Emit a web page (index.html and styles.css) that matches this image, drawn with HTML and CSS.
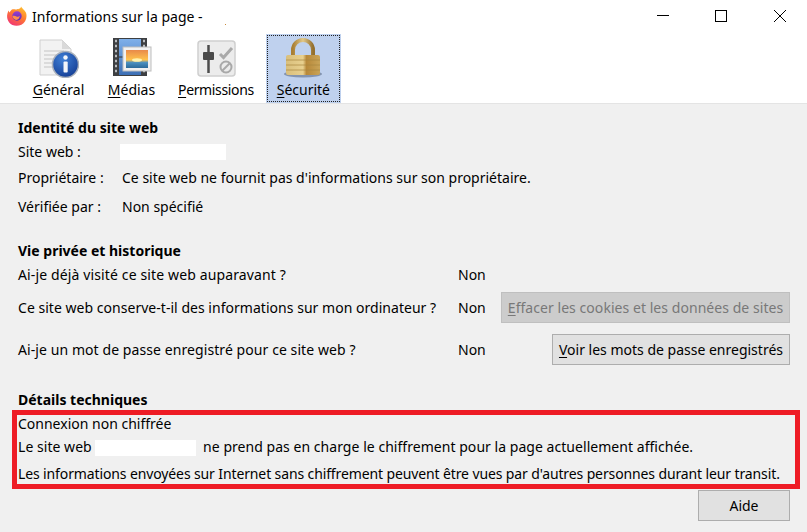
FILE: index.html
```html
<!DOCTYPE html>
<html lang="fr">
<head>
    <meta charset="UTF-8">
    <meta name="viewport" content="width=device-width, initial-scale=1.0">
    <title>Informations sur la page</title>
    <link rel="stylesheet" href="styles.css">
</head>
<body>
    <div class="titlebar">
        <svg class="app-logo" width="20" height="20" viewBox="0 0 20 20">
            <defs>
                <linearGradient id="foxOuter" x1="0.8" y1="0" x2="0.2" y2="1">
                    <stop offset="0" stop-color="#ffc22e"/>
                    <stop offset="0.45" stop-color="#ff7a2f"/>
                    <stop offset="1" stop-color="#f0307a"/>
                </linearGradient>
                <linearGradient id="foxInner" x1="0.5" y1="0" x2="0.5" y2="1">
                    <stop offset="0" stop-color="#9a3fd0"/>
                    <stop offset="1" stop-color="#5b2bb0"/>
                </linearGradient>
            </defs>
            <path d="M14 0.500c.8 1.800 3.600 3.200 5 6.200 1.600 4.800-.6 10-4.600 12-4 2-9.400 1.400-12.200-2.100C.4 14.200-.300 11 .300 8.300c.2-1.200.8-2.900 1.500-3.800.1.900.4 1.500.9 2 .5-1.300 1.500-2.500 2.900-3.200.8 0 2.400-.1 3 .3C10.500 3.300 14 3 14 .5z" fill="url(#foxOuter)"/>
            <circle cx="10" cy="10" r="4.700" fill="url(#foxInner)"/>
            <path d="M5.500 10c1.500-.6 2.800-.2 4 .4 1.200.6 2.400.2 3.300-.6-.2 2.300-1.500 4-3.600 4.100-1.700.1-3.400-1.700-3.700-3.900z" fill="#ff8f4a"/>
        </svg>
        <span class="title-text">Informations sur la page -</span>
        <span class="title-dot"></span>
        <div class="window-buttons">
            <svg width="14" height="14" viewBox="0 0 14 14"><path d="M0 6.500h12" stroke="#000" fill="none"/></svg>
            <svg width="14" height="14" viewBox="0 0 14 14"><rect x="0.500" y="1.500" width="11" height="11" stroke="#000" fill="none"/></svg>
            <svg width="14" height="14" viewBox="0 0 14 14"><path d="M1 1l12 12M13 1L1 13" stroke="#000" fill="none"/></svg>
        </div>
    </div>

    <nav class="toolbar">
        <a class="tab">
            <svg class="tab-icon" width="40" height="40" viewBox="0 0 40 40">
                <defs>
                    <radialGradient id="infoBlue" cx="0.4" cy="0.3" r="0.8">
                        <stop offset="0" stop-color="#3f7fd6"/>
                        <stop offset="1" stop-color="#12398f"/>
                    </radialGradient>
                </defs>
                <path d="M1 2h22l9 9v26H1z" fill="#f2f2f2" stroke="#cfcfcf"/>
                <path d="M23 2v9h9z" fill="#d9d9d9"/>
                <path d="M5 13h20M5 17h18M5 21h14M5 25h12M5 29h12" stroke="#c4c4c4"/>
                <circle cx="26.500" cy="26.500" r="13" fill="url(#infoBlue)" stroke="#a9b0bb" stroke-width="1.500"/>
                <circle cx="26.500" cy="19.500" r="2.200" fill="#f4f6fa"/>
                <rect x="24.500" y="23.500" width="4.200" height="11" rx="1" fill="#f4f6fa"/>
            </svg>
            <span><u>G</u>énéral</span>
        </a>
        <a class="tab tab-medias">
            <svg class="tab-icon" width="40" height="40" viewBox="-1 0 40 40">
                <defs>
                    <linearGradient id="sunset" x1="0" y1="0" x2="0" y2="1">
                        <stop offset="0" stop-color="#e8894a"/>
                        <stop offset="0.55" stop-color="#ffc34d"/>
                        <stop offset="0.7" stop-color="#4a8fc0"/>
                        <stop offset="1" stop-color="#2d6a99"/>
                    </linearGradient>
                    <linearGradient id="filmBlue" x1="0" y1="0" x2="0" y2="1">
                        <stop offset="0" stop-color="#7fb0ea"/>
                        <stop offset="1" stop-color="#3c6fb5"/>
                    </linearGradient>
                </defs>
                <rect x="0" y="0" width="34" height="38" fill="#3d3f42"/>
                <rect x="6" y="1" width="22" height="36" fill="url(#filmBlue)"/>
                <path d="M6 19h22" stroke="#333"/>
                <path d="M2 3h2M2 8h2M2 13h2M2 18h2M2 23h2M2 28h2M2 33h2M30 3h2M30 8h2" stroke="#b9bcc0" stroke-width="2.500"/>
                <path d="M30 33h2" stroke="#b9bcc0" stroke-width="2.500"/>
                <rect x="10" y="9" width="28" height="24" fill="#f1f1f1" stroke="#bdbdbd"/>
                <rect x="13" y="12" width="22" height="18" fill="url(#sunset)"/>
                <ellipse cx="24" cy="22" rx="5" ry="1.800" fill="#fff2b0"/>
            </svg>
            <span><u>M</u>édias</span>
        </a>
        <a class="tab tab-permissions">
            <svg class="tab-icon" width="40" height="40" viewBox="-1 0 40 40">
                <rect x="1" y="3" width="37" height="35" rx="3" fill="#ececec" stroke="#cfcfcf" stroke-width="1.500"/>
                <path d="M11.500 7v28" stroke="#4c4c4c" stroke-width="2.500"/>
                <rect x="6" y="14" width="11" height="8" rx="1" fill="#4a4a4a"/>
                <path d="M23 16l3.500 3.500L35 10" fill="none" stroke="#a9a9a9" stroke-width="3"/>
                <circle cx="29" cy="29" r="5.500" fill="none" stroke="#a9a9a9" stroke-width="2"/>
                <path d="M25.500 32.500l7-7" stroke="#a9a9a9" stroke-width="2"/>
            </svg>
            <span><u>P</u>ermissions</span>
        </a>
        <a class="tab tab-selected">
            <svg class="tab-icon" width="40" height="40" viewBox="0 0 40 40">
                <defs>
                    <linearGradient id="lockBody" x1="0" y1="0" x2="1" y2="0">
                        <stop offset="0" stop-color="#d9bf7c"/>
                        <stop offset="0.5" stop-color="#e8d08f"/>
                        <stop offset="0.6" stop-color="#b8893a"/>
                        <stop offset="1" stop-color="#c9a458"/>
                    </linearGradient>
                    <linearGradient id="lockRing" x1="0" y1="0" x2="1" y2="0">
                        <stop offset="0" stop-color="#a97f35"/>
                        <stop offset="0.5" stop-color="#e2c98a"/>
                        <stop offset="1" stop-color="#94702f"/>
                    </linearGradient>
                </defs>
                <ellipse cx="20" cy="36" rx="19" ry="3.500" fill="#5b6a85" opacity="0.6"/>
                <path d="M10 19V12a10 10 0 0 1 20 0v7" fill="none" stroke="url(#lockRing)" stroke-width="4"/>
                <rect x="3" y="17" width="34" height="20" rx="2" fill="url(#lockBody)"/>
                <path d="M3 22h34M3 27h34M3 32h34" stroke="#a8873f" stroke-opacity="0.7"/>
            </svg>
            <span><u>S</u>écurité</span>
        </a>
    </nav>

    <main class="content">
        <section class="section section-identity">
            <h2>Identité du site web</h2>
            <div class="info-row info-row-first">
                <span class="info-label">Site web :</span>
                <span class="blank blank-site"></span>
            </div>
            <div class="info-row">
                <span class="info-label">Propriétaire :</span>
                <span>Ce site web ne fournit pas d'informations sur son propriétaire.</span>
            </div>
            <div class="info-row">
                <span class="info-label">Vérifiée par :</span>
                <span>Non spécifié</span>
            </div>
        </section>

        <section class="section section-privacy">
            <h2>Vie privée et historique</h2>
            <div class="privacy-row privacy-row-short">
                <span class="privacy-label label-visited">Ai-je déjà visité ce site web auparavant ?</span>
                <span>Non</span>
            </div>
            <div class="privacy-row">
                <span class="privacy-label label-cookies">Ce site web conserve-t-il des informations sur mon ordinateur ?</span>
                <span>Non</span>
                <button class="btn btn-clear" disabled><u>E</u>ffacer les cookies et les données de sites</button>
            </div>
            <div class="privacy-row">
                <span class="privacy-label">Ai-je un mot de passe enregistré pour ce site web ?</span>
                <span>Non</span>
                <button class="btn"><u>V</u>oir les mots de passe enregistrés</button>
            </div>
        </section>

        <section class="section section-details">
            <h2>Détails techniques</h2>
            <div class="details-box">
                <p>Connexion non chiffrée</p>
                <p class="line-site">Le site web <span class="blank blank-inline"></span> ne prend pas en charge le chiffrement pour la page actuellement affichée.</p>
                <p class="line-transit">Les informations envoyées sur Internet sans chiffrement peuvent être vues par d'autres personnes durant leur transit.</p>
            </div>
        </section>

        <div class="footer">
            <button class="btn btn-help">Aide</button>
        </div>
    </main>
</body>
</html>
```

FILE: styles.css
```css
* {
    box-sizing: border-box;
}
html, body {
    height: 100%;
}
body {
    margin: 0;
    background-color: #fff;
    color: #000;
    font-family: "Noto Sans", "Open Sans", sans-serif;
    font-size: 14px;
    display: flex;
    flex-direction: column;
    overflow: hidden;
}
u {
    text-underline-offset: 2px;
}

/* title bar */
.titlebar {
    height: 34px;
    flex: none;
    display: flex;
    align-items: center;
    padding-left: 7px;
}
.app-logo {
    flex: none;
    margin-bottom: 2px;
}
.title-text {
    margin: 0 0 1px 5px;
}
.title-dot {
    width: 1px;
    height: 1px;
    margin: 14px 0 0 22px;
    background-color: #c98a3c;
}
.window-buttons {
    margin-left: auto;
    display: flex;
    gap: 44px;
    padding: 0 20px 2px 0;
}

/* toolbar */
.toolbar {
    height: 70px;
    flex: none;
    display: flex;
    padding-left: 21px;
    border-bottom: 1px solid #e4e4e4;
}
.tab {
    min-width: 75px;
    padding: 2px 7px 0;
    display: flex;
    flex-direction: column;
    align-items: center;
    justify-content: space-between;
    white-space: nowrap;
}
.tab-icon {
    margin-top: 2px;
    flex: none;
}
.tab span {
    margin-bottom: 4px;
}
.tab-medias {
    margin: 0 2px 0 -2px;
}
.tab-permissions span {
    letter-spacing: -0.35px;
}
.tab-permissions {
    margin-left: -2px;
    padding: 2px 7px 0 9px;
}
.tab-selected {
    margin-left: 5px;
    background-color: #bfd1ee;
    outline: 1px dotted #222;
    outline-offset: -2px;
}

/* content */
.content {
    flex: 1;
    background-color: #f0f0f0;
    padding: 14px 17px 0 18px;
    display: flex;
    flex-direction: column;
}
h2 {
    margin: 0;
    font-size: 14px;
    font-weight: 700;
    line-height: 20px;
}
.section-privacy {
    margin-top: 20px;
}
.section-details {
    margin-top: 20px;
}
.info-row {
    display: flex;
    align-items: center;
    height: 29px;
}
.info-row-first {
    height: 23px;
    margin-top: 2px;
}
.info-label {
    width: 104px;
    flex: none;
}
.blank {
    display: inline-block;
    background-color: #fff;
    height: 16px;
}
.blank-site {
    width: 106px;
    margin-left: -2px;
}
.blank-inline {
    width: 101px;
    margin-right: 3px;
    vertical-align: -4px;
}
.privacy-row {
    display: grid;
    grid-template-columns: 440px 43px 1fr;
    align-items: center;
    height: 42px;
}
.privacy-row-short {
    height: 24px;
    margin-top: 1px;
}
.privacy-label {
    letter-spacing: 0.08px;
    white-space: nowrap;
}
.label-visited {
    letter-spacing: 0.13px;
}
.label-cookies {
    letter-spacing: 0.03px;
}
.btn {
    justify-self: end;
    height: 31px;
    padding: 0 6px;
    background-color: #e1e1e1;
    border: 1px solid #adadad;
    border-radius: 0;
    color: #000;
    font-family: inherit;
    font-size: 14px;
    white-space: nowrap;
}
.btn:disabled {
    background-color: #cccccc;
    border-color: #bfbfbf;
    color: #787878;
}
.btn-clear {
    width: 289px;
    padding: 0;
    letter-spacing: 0.05px;
}
.details-box {
    margin: 0 -10px 0 -6px;
    border: 5px solid #ee1c25;
    padding: 0 0 0 1px;
    height: 79px;
}
.details-box p {
    margin: 0;
    line-height: 18px;
    white-space: nowrap;
}
.details-box .line-site {
    margin-top: 5px;
    letter-spacing: 0.04px;
}
.details-box .line-transit {
    margin-top: 9px;
    letter-spacing: -0.12px;
}
.footer {
    display: flex;
    justify-content: flex-end;
    margin-top: 1px;
}
.btn-help {
    width: 92px;
}
```
